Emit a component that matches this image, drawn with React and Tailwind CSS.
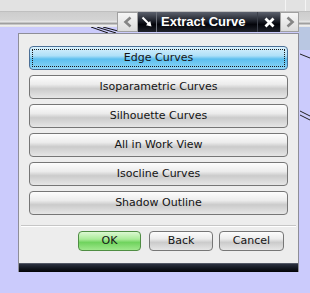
const items = [
  'Edge Curves',
  'Isoparametric Curves',
  'Silhouette Curves',
  'All in Work View',
  'Isocline Curves',
  'Shadow Outline',
];

const font = "font-['DejaVu_Sans',Verdana,sans-serif]";

function ListButton({ label, active }) {
  if (active) {
    return (
      <div className="h-[24px] rounded-[4px] border border-[#4c6f96] bg-[linear-gradient(#d9f1fd,#aee0f8_40%,#5cbfef_55%,#8ed6f8)] p-[2px]">
        <div className="h-full border border-dotted border-[#1a1a1a] flex items-center justify-center text-[11px] text-[#141414]">
          {label}
        </div>
      </div>
    );
  }
  return (
    <div className="h-[24px] rounded-[4px] border border-[#767676] bg-[linear-gradient(#fdfdfd,#ececec_38%,#cbcbcb_58%,#e6e6e6)] flex items-center justify-center text-[11px] text-[#141414]">
      {label}
    </div>
  );
}

function FootButton({ label, green, className }) {
  const skin = green
    ? 'border-[#4f8d43] bg-[linear-gradient(#dcf8d2,#a9eb98_40%,#70d35e_58%,#9fe88c)]'
    : 'border-[#767676] bg-[linear-gradient(#fdfdfd,#ececec_38%,#cbcbcb_58%,#e6e6e6)]';
  return (
    <div className={`h-[20px] rounded-[4px] border ${skin} flex items-center justify-center text-[11px] text-[#141414] ${className}`}>
      {label}
    </div>
  );
}

function Chevron({ dir }) {
  return (
    <svg width="10" height="12" viewBox="0 0 10 12">
      <path
        d={dir === 'left' ? 'M7.5 1.5 L2.5 6 L7.5 10.5' : 'M2.5 1.5 L7.5 6 L2.5 10.5'}
        fill="none"
        stroke="#858585"
        strokeWidth="2.6"
      />
    </svg>
  );
}

function TitleTab() {
  return (
    <div className="absolute left-[117px] top-[12px] h-[20px] flex">
      <div className="w-[21px] border border-[#a0a0a0] bg-[linear-gradient(#f6f6f6,#dcdcdc)] flex items-center justify-center">
        <Chevron dir="left" />
      </div>
      <div className="w-[142px] flex bg-[linear-gradient(#5c616d,#1d2029_45%,#03040a_62%,#1f222a)]">
        <div className="w-[19px] border-r border-[#6d717a] flex items-center justify-center">
          <svg width="12" height="12" viewBox="0 0 12 12">
            <path d="M1.5 1.5 L8 8" stroke="#fff" strokeWidth="2" />
            <path d="M10.5 10.5 L5 9.2 L9.2 5 Z" fill="#fff" />
          </svg>
        </div>
        <div className="w-[101px] border-r border-[#3c404a] pl-[4px] flex items-center text-[13px] font-bold text-white font-['Liberation_Sans',Arial,sans-serif]">
          Extract Curve
        </div>
        <div className="flex-1 flex items-center justify-center">
          <svg width="11" height="11" viewBox="0 0 11 11">
            <path d="M1.5 1.5 L9.5 9.5 M9.5 1.5 L1.5 9.5" stroke="#fff" strokeWidth="2.8" />
          </svg>
        </div>
      </div>
      <div className="w-[19px] border border-[#a0a0a0] bg-[linear-gradient(#f6f6f6,#dcdcdc)] flex items-center justify-center">
        <Chevron dir="right" />
      </div>
    </div>
  );
}

export default function App() {
  return (
    <div className={`relative w-[310px] h-[293px] overflow-hidden bg-[#cbcbfc] ${font}`}>
      <svg className="absolute inset-0" width="310" height="293">
        <rect x="299" y="27" width="11" height="23" fill="#b9c7e2" />
        <path d="M91 27 L108 33 M97 27 L116 33 M103 27 L118 31" stroke="#111" strokeWidth="1" />
        <path d="M300 54 L310 58 M300 111 L310 116 M300 115 L310 120" stroke="#222" strokeWidth="1" />
      </svg>

      <div className="relative h-[11px] bg-[#e2e2e2]">
        <div className="absolute left-[285px] top-0 h-full w-px bg-[#f4f4f4]" />
        <div className="absolute left-[305px] top-0 h-full w-px bg-[#f4f4f4]" />
      </div>
      <div className="relative h-[16px] bg-[linear-gradient(#b2b2b2_0px,#cdcdcd_1px,#d4d4d4_9px,#e9e9e9_11px,#a3a3a3_12px,#9b9b9b_13px,#f1f1f1_14px,#e3e3e3_16px)]" />

      <TitleTab />

      <div className="relative ml-[18px] mt-[6px] w-[281px] h-[239px] flex flex-col border-x border-t border-[#8e8e98] bg-[#ededed]">
        <div className="flex flex-col gap-[5px] px-[10px] pt-[12px]">
          {items.map((label, i) => (
            <ListButton key={label} label={label} active={i === 0} />
          ))}
        </div>
        <div className="mx-[2px] mt-[10px] h-[2px] border-t border-[#c6c6c6] border-b-white border-b" />
        <div className="flex mt-[4px] pl-[59px]">
          <FootButton label="OK" green className="w-[63px]" />
          <FootButton label="Back" className="w-[64px] ml-[8px]" />
          <FootButton label="Cancel" className="w-[65px] ml-[6px]" />
        </div>
        <div className="mt-auto h-[9px] bg-[linear-gradient(#7a7f8a_0px,#2c3140_1px,#141821_5px,#030305)]" />
      </div>
    </div>
  );
}
